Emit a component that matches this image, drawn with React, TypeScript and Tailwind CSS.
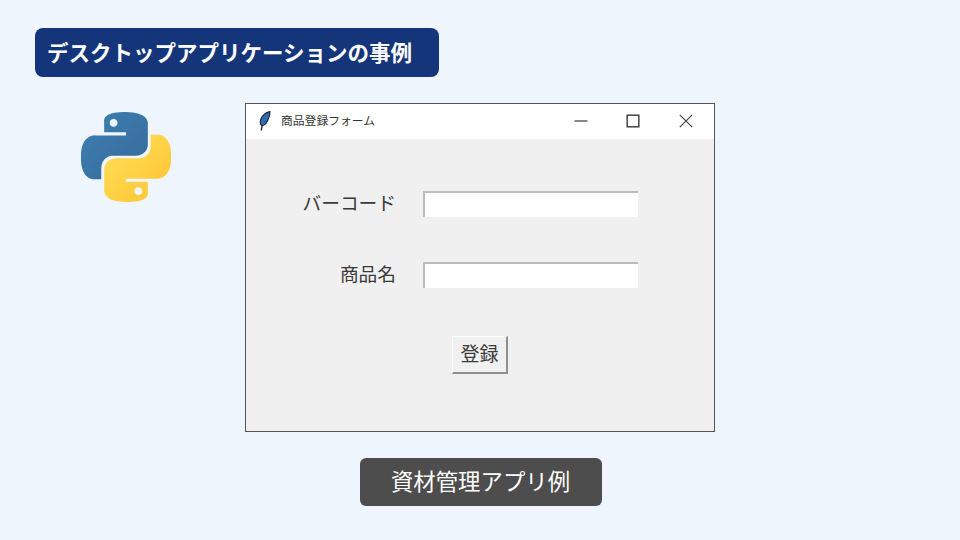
const jp = "font-['Noto_Sans_CJK_JP','Noto_Sans',sans-serif]";

function PythonLogo() {
	return (
		<svg viewBox="0 0 24 24" className="h-[90px] w-[90px]" aria-hidden="true">
			<defs>
				<linearGradient id="py-blue" x1="0" y1="0" x2="1" y2="1">
					<stop offset="0" stopColor="#3d80b5" />
					<stop offset="1" stopColor="#376a97" />
				</linearGradient>
				<linearGradient id="py-yellow" x1="0" y1="0" x2="1" y2="1">
					<stop offset="0" stopColor="#ffe05a" />
					<stop offset="1" stopColor="#ffc331" />
				</linearGradient>
			</defs>
			<path
				fill="url(#py-blue)"
				fillRule="evenodd"
				d="M14.25.18l.9.2.73.26.59.3.45.32.34.34.25.34.16.33.1.3.04.26.02.2-.01.13V8.5l-.05.63-.13.55-.21.46-.26.38-.3.31-.33.25-.35.19-.35.14-.33.1-.3.07-.26.04-.21.02H8.77l-.69.05-.59.14-.5.22-.41.27-.33.32-.27.35-.2.36-.15.37-.1.35-.07.32-.04.27-.02.21v3.06H3.17l-.21-.03-.28-.07-.32-.12-.35-.18-.36-.26-.36-.36-.35-.46-.32-.59-.28-.73-.21-.88-.14-1.05-.05-1.23.06-1.22.16-1.04.24-.87.32-.71.36-.57.4-.44.42-.33.42-.24.4-.16.36-.1.32-.05.24-.01h.16l.06.01h8.16v-.83H6.18l-.01-2.75-.02-.37.05-.34.11-.31.17-.28.25-.26.31-.23.38-.2.44-.18.51-.15.58-.12.64-.1.71-.06.77-.04.84-.02 1.27.05zM7.95 2.16l-.23.33-.08.41.08.41.23.34.33.22.41.09.41-.09.33-.22.23-.34.08-.41-.08-.41-.23-.33-.33-.22-.41-.09-.41.09z"
			/>
			<path
				fill="url(#py-yellow)"
				fillRule="evenodd"
				d="M21.04 6.11l.28.06.32.12.35.18.36.27.36.35.35.47.32.59.28.73.21.88.14 1.04.05 1.23-.06 1.23-.16 1.04-.24.86-.32.71-.36.57-.4.45-.42.33-.42.24-.4.16-.36.09-.32.05-.24.02-.16-.01h-8.22v.82h5.84l.01 2.76.02.36-.05.34-.11.31-.17.29-.25.25-.31.24-.38.2-.44.17-.51.15-.58.13-.64.09-.71.07-.77.04-.84.01-1.27-.04-1.07-.14-.9-.2-.73-.25-.59-.3-.45-.33-.34-.34-.25-.34-.16-.33-.1-.3-.04-.25-.02-.2.01-.13v-5.34l.05-.64.13-.54.21-.46.26-.38.3-.32.33-.24.35-.2.35-.14.33-.1.3-.06.26-.04.21-.02.13-.01h5.84l.69-.05.59-.14.5-.21.41-.28.33-.32.27-.35.2-.36.15-.36.1-.35.07-.32.04-.28.02-.21V6.07h2.09l.14.01zM14.57 20.36l-.23.33-.08.41.08.41.23.33.33.23.41.08.41-.08.33-.23.23-.33.08-.41-.08-.41-.23-.33-.33-.23-.41-.08-.41.08z"
			/>
		</svg>
	);
}

function Feather() {
	return (
		<svg viewBox="0 0 12 20" className="h-5 w-3" aria-hidden="true">
			<path d="M2.2 19.5 L3.5 13" stroke="#222" strokeWidth="1.3" fill="none" />
			<path
				d="M10.9 0.6 C7 1.2 2.4 4.6 1.4 9.6 C1 12 1.6 14.2 3.2 14.8 C6.4 14.2 8.8 10.2 10 6.2 C10.7 4 11 2 10.9 0.6 Z"
				fill="#2f6bb0"
				stroke="#1a2533"
				strokeWidth="1.1"
			/>
		</svg>
	);
}

// caption buttons of the title bar, drawn on a 14px grid
function WindowControls() {
	return (
		<div className="ml-auto flex items-center pr-[21px] pb-[2px] text-[#444444]">
			<svg viewBox="0 0 14 14" className="h-[14px] w-[14px]" aria-hidden="true">
				<path d="M0.5 7H13.5" stroke="currentColor" strokeWidth="1.3" />
			</svg>
			<svg viewBox="0 0 14 14" className="ml-[38px] h-[14px] w-[14px]" aria-hidden="true">
				<rect x="1.2" y="1.2" width="11.6" height="11.6" fill="none" stroke="currentColor" strokeWidth="1.5" />
			</svg>
			<svg viewBox="0 0 14 14" className="ml-[39px] h-[14px] w-[14px]" aria-hidden="true">
				<path d="M0.8 0.8L13.2 13.2M13.2 0.8L0.8 13.2" stroke="currentColor" strokeWidth="1.2" fill="none" />
			</svg>
		</div>
	);
}

function FormRow({ label }: { label: string }) {
	return (
		<div className="flex h-[26px] items-start gap-[27px]">
			<span className="h-[26px] w-[150px] text-right text-[18.7px] leading-[22px] text-[#3a3a3a]">
				{label}
			</span>
			<div className="h-[26px] w-[215px] border-t-2 border-l-2 border-[#bcbcbc] bg-white" />
		</div>
	);
}

export default function App() {
	return (
		<div className={`flex h-[540px] w-[960px] flex-col items-start overflow-hidden bg-[#eef5fd] pt-[28px] ${jp}`}>
			{/* Heading */}
			<div className="ml-[35px] flex h-[49px] w-[404px] items-center rounded-[8px] bg-[#15357a] pl-[12px] text-[21.5px] font-bold whitespace-nowrap text-white">
				デスクトップアプリケーションの事例
			</div>

			<div className="mt-[26px] flex items-start">
				<div className="mt-[9px] ml-[81px]">
					<PythonLogo />
				</div>

				{/* Tk window */}
				<div className="ml-[74px] flex h-[329px] w-[470px] flex-col border border-[#555555] bg-[#f0f0f0]">
					<div className="flex h-[35px] items-center bg-white pl-[13px]">
						<div className="pb-[2px]">
							<Feather />
						</div>
						<span className="ml-[10px] pb-[4px] text-[11.8px] whitespace-nowrap text-[#333333]">
							商品登録フォーム
						</span>
						<WindowControls />
					</div>
					<div className="flex flex-col pt-[52px]">
						<FormRow label="バーコード" />
						<div className="mt-[45px]">
							<FormRow label="商品名" />
						</div>
						<button
							type="button"
							className="mt-[48px] ml-[206px] h-[38px] w-[56px] border-t border-l border-white border-r-2 border-b-2 border-r-[#8f8f8f] border-b-[#8f8f8f] bg-[#f0f0f0] pb-[2px] text-[19px] text-[#3a3a3a]"
						>
							登録
						</button>
					</div>
				</div>
			</div>

			{/* Caption */}
			<div className="mt-[26px] ml-[360px] flex h-[48px] w-[242px] items-center justify-center rounded-[6px] bg-[#4d4d4d] pr-[1px] pb-[2px] text-[22.4px] whitespace-nowrap text-white">
				資材管理アプリ例
			</div>
		</div>
	);
}
